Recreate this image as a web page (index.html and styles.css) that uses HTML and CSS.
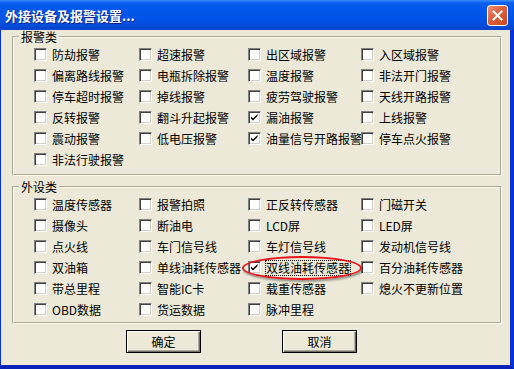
FILE: index.html
```html
<!DOCTYPE html>
<html lang="zh-CN">

<head>
  <meta charset="UTF-8" />
  <title>外接设备及报警设置</title>
  <link rel="stylesheet" href="styles.css">
</head>

<body>
  <div class="window">
    <div class="titlebar">
      <span class="title">外接设备及报警设置...</span>
      <button class="close" title="关闭">
        <svg width="11" height="11" viewBox="0 0 11 11">
          <path d="M1.5 1.5 L9.5 9.5 M9.5 1.5 L1.5 9.5" stroke="#fff" stroke-width="2" stroke-linecap="square" />
        </svg>
      </button>
    </div>
    <div class="client">
      <!-- 报警类 -->
      <fieldset class="group">
        <legend>报警类</legend>
        <div class="options">
          <label><input type="checkbox">防劫报警</label>
          <label><input type="checkbox">超速报警</label>
          <label><input type="checkbox">出区域报警</label>
          <label><input type="checkbox">入区域报警</label>
          <label><input type="checkbox">偏离路线报警</label>
          <label><input type="checkbox">电瓶拆除报警</label>
          <label><input type="checkbox">温度报警</label>
          <label><input type="checkbox">非法开门报警</label>
          <label><input type="checkbox">停车超时报警</label>
          <label><input type="checkbox">掉线报警</label>
          <label><input type="checkbox">疲劳驾驶报警</label>
          <label><input type="checkbox">天线开路报警</label>
          <label><input type="checkbox">反转报警</label>
          <label><input type="checkbox">翻斗升起报警</label>
          <label><input type="checkbox" checked>漏油报警</label>
          <label><input type="checkbox">上线报警</label>
          <label><input type="checkbox">震动报警</label>
          <label><input type="checkbox">低电压报警</label>
          <label><input type="checkbox" checked>油量信号开路报警</label>
          <label><input type="checkbox">停车点火报警</label>
          <label><input type="checkbox">非法行驶报警</label>
        </div>
      </fieldset>

      <!-- 外设类 -->
      <fieldset class="group group-device">
        <legend>外设类</legend>
        <div class="options">
          <label><input type="checkbox">温度传感器</label>
          <label><input type="checkbox">报警拍照</label>
          <label><input type="checkbox">正反转传感器</label>
          <label><input type="checkbox">门磁开关</label>
          <label><input type="checkbox">摄像头</label>
          <label><input type="checkbox">断油电</label>
          <label><input type="checkbox">LCD屏</label>
          <label><input type="checkbox">LED屏</label>
          <label><input type="checkbox">点火线</label>
          <label><input type="checkbox">车门信号线</label>
          <label><input type="checkbox">车灯信号线</label>
          <label><input type="checkbox">发动机信号线</label>
          <label><input type="checkbox">双油箱</label>
          <label><input type="checkbox">单线油耗传感器</label>
          <label class="marked"><input type="checkbox" checked><span class="focus">双线油耗传感器</span></label>
          <label><input type="checkbox">百分油耗传感器</label>
          <label><input type="checkbox">带总里程</label>
          <label><input type="checkbox">智能IC卡</label>
          <label><input type="checkbox">载重传感器</label>
          <label><input type="checkbox">熄火不更新位置</label>
          <label><input type="checkbox">OBD数据</label>
          <label><input type="checkbox">货运数据</label>
          <label><input type="checkbox">脉冲里程</label>
        </div>
      </fieldset>

      <div class="buttons">
        <button class="btn btn-default">确定</button>
        <button class="btn">取消</button>
      </div>
    </div>
  </div>
</body>

</html>
```

FILE: styles.css
```css
* {
  box-sizing: border-box;
}

body {
  margin: 0;
  width: 514px;
  height: 369px;
  overflow: hidden;
  font-family: "Noto Sans CJK SC", "Noto Sans", sans-serif;
  font-size: 12px;
  color: #000;
}

.window {
  display: flex;
  flex-direction: column;
  height: 369px;
}

.titlebar {
  height: 30px;
  display: flex;
  align-items: center;
  justify-content: space-between;
  padding: 0 6px 0 5px;
  background: linear-gradient(#3a8cf7 0, #0a5fef 3px, #0058ee 8px, #0055e8 55%, #004fdf 80%, #0043cc 100%);
}

.titlebar .title {
  color: #fff;
  font-weight: bold;
  font-size: 13px;
  text-shadow: 1px 1px 0 #0a1e8a;
}

.close {
  width: 21px;
  height: 21px;
  padding: 0;
  border: 1px solid #fff;
  border-radius: 3px;
  background: linear-gradient(135deg, #f0947a 0%, #e0613f 40%, #cc4420 100%);
  display: flex;
  align-items: center;
  justify-content: center;
  cursor: pointer;
}

.client {
  flex: 1;
  background: #ece9d8;
  border-left: 1px solid #0831d9;
  border-right: 4px solid #0831d9;
  border-bottom: 4px solid #0322b8;
  padding: 0 8px 0 11px;
}

.group {
  margin: 0;
  padding: 0 0 4px 20px;
  border: 2px groove #fffce6;
}

.group legend {
  margin-left: -15px;
  padding: 0 2px;
  line-height: 14px;
}

.group-device {
  margin-top: 4px;
  padding-bottom: 2px;
}

.options {
  display: grid;
  grid-template-columns: 105px 109px 113px 1fr;
  grid-auto-rows: 21px;
}

.options label {
  display: flex;
  align-items: center;
  gap: 5px;
  white-space: nowrap;
}

.options input {
  appearance: none;
  margin: 0;
  width: 13px;
  height: 13px;
  flex: none;
  background: #fff;
  border: 1px solid;
  border-color: #808080 #fff #fff #808080;
  box-shadow: inset 1px 1px 0 #404040, inset -1px -1px 0 #d4d0c8;
}

.options input:checked {
  background: #fff url("data:image/svg+xml,%3Csvg xmlns='http://www.w3.org/2000/svg' width='11' height='11'%3E%3Cpath d='M2 4.5 L4 6.5 L8.5 2 L8.5 4 L4 8.5 L2 6.5 Z' fill='%23000'/%3E%3C/svg%3E") no-repeat center;
}

/* 红圈标注 */
.marked {
  position: relative;
}

.marked .focus {
  outline: 1px dotted #000;
  outline-offset: 0;
  line-height: 14px;
}

.marked::after {
  content: "";
  position: absolute;
  left: -6px;
  top: -1px;
  width: 116px;
  height: 20px;
  border: 2px solid #e8141c;
  border-radius: 50%;
  box-shadow: 1px 2px 2px rgba(0, 0, 0, 0.35);
}

.buttons {
  display: flex;
  gap: 81px;
  margin-top: 6px;
  padding-left: 114px;
}

.btn {
  width: 75px;
  height: 23px;
  padding: 0;
  font-family: inherit;
  font-size: 12px;
  background: #ece9d8;
  border: 1px solid #000;
  box-shadow: inset 1px 1px 0 #fff, inset -1px -1px 0 #716f64, inset -2px -2px 0 #aca899;
  cursor: pointer;
}
```
